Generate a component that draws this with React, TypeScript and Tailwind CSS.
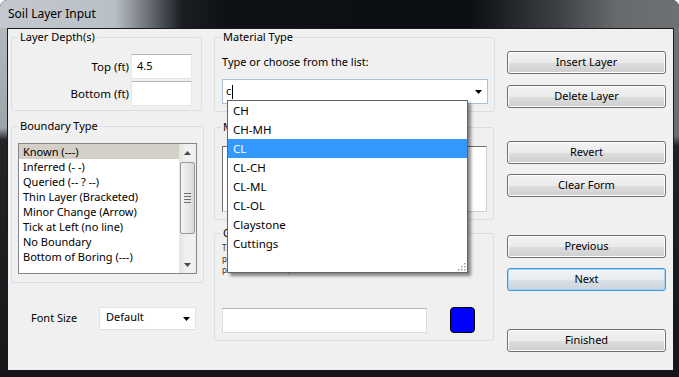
import React from "react";

const boundaryTypes = [
  "Known (---)",
  "Inferred (- -)",
  "Queried (-- ? --)",
  "Thin Layer (Bracketed)",
  "Minor Change (Arrow)",
  "Tick at Left (no line)",
  "No Boundary",
  "Bottom of Boring (---)",
];

const materials = ["CH", "CH-MH", "CL", "CL-CH", "CL-ML", "CL-OL", "Claystone", "Cuttings"];

function Arrow({ up = false, color = "#000" }: { up?: boolean; color?: string }) {
  return (
    <svg width="7" height="4" viewBox="0 0 7 4">
      {up ? <path d="M0 4 L3.5 0 L7 4 Z" fill={color} /> : <path d="M0 0 L7 0 L3.5 4 Z" fill={color} />}
    </svg>
  );
}

function Btn({ label, mt, isDefault = false }: { label: string; mt: string; isDefault?: boolean }) {
  return (
    <button
      className={`${mt} flex h-[23px] w-[159px] items-center justify-center rounded-[3px] border text-[11px] text-black ${
        isDefault
          ? "border-[#3d95dc] bg-[linear-gradient(to_bottom,#f1f5f8_0%,#e7ecf0_50%,#d9e0e6_51%,#cdd5dc_100%)] shadow-[inset_0_0_0_1px_#a8d6f5]"
          : "border-[#707070] bg-[linear-gradient(to_bottom,#f2f2f2_0%,#ebebeb_50%,#dddddd_51%,#cfcfcf_100%)] shadow-[inset_0_0_0_1px_#fcfcfc]"
      }`}
    >
      {label}
    </button>
  );
}

function Group({ title, className, children }: { title: string; className: string; children?: React.ReactNode }) {
  return (
    <fieldset className={`${className} rounded-[3px] border border-[#d5dfe5] px-[6px] pb-0 pt-0`}>
      <legend className="px-[2px] leading-[16px] text-black">{title}</legend>
      {children}
    </fieldset>
  );
}

export default function App() {
  return (
    <div className="h-[377px] w-[679px] bg-white">
      <div className="flex h-full w-full flex-col overflow-hidden rounded-t-[7px] bg-[#131518] font-['Noto_Sans',sans-serif] text-[11px]">
        {/* TITLE BAR */}
        <div className="flex h-[28px] items-center bg-[linear-gradient(90deg,#c4c9cf_0px,#b9bfc6_115px,#5b6066_155px,#1a1e23_182px,#0d1116_230px,#0b0f14_470px,#3e4246_560px,#67696c_615px,#6e7174_679px)] pl-[8px] text-[12px] text-black">
          Soil Layer Input
        </div>

        <div className="flex">
          <div className="w-[7px] bg-[linear-gradient(180deg,#b3b8bd_0px,#9fa4a9_100px,#222528_112px,#15171a_100%)]" />

          {/* CLIENT */}
          <div className="flex h-[343px] w-[667px] border border-[#1b1b1b] bg-[#f0f0f0]">
            {/* LEFT COLUMN */}
            <div className="ml-[3px] flex w-[191px] flex-col">
              <Group title="Layer Depth(s)" className="h-[82px]">
                <div className="mt-[9px] flex flex-col gap-[2px] pr-[3px]">
                  <div className="flex items-center justify-end">
                    <span className="mr-[2px] text-[11.5px] text-black">Top (ft)</span>
                    <div className="flex h-[25px] w-[61px] items-center border border-[#e3e6ea] border-t-[#b5b8bd] bg-white pl-[5px]">
                      4.5
                    </div>
                  </div>
                  <div className="flex items-center justify-end">
                    <span className="mr-[2px] text-[11.5px] text-black">Bottom (ft)</span>
                    <div className="h-[25px] w-[61px] border border-[#e3e6ea] border-t-[#b5b8bd] bg-white" />
                  </div>
                </div>
              </Group>

              <Group title="Boundary Type" className="mt-[7px] h-[165px]">
                <div className="mt-[9px] flex h-[131px] w-[179px] border border-[#828790] bg-white">
                  <div className="flex-1">
                    {boundaryTypes.map((b, i) => (
                      <div
                        key={b}
                        className={`flex h-[15px] items-center pl-[4px] leading-[15px] text-black ${
                          i === 0 ? "bg-[#d4d0c8]" : ""
                        }`}
                      >
                        {b}
                      </div>
                    ))}
                  </div>
                  {/* scrollbar */}
                  <div className="flex w-[17px] flex-col items-center bg-[linear-gradient(90deg,#e3e3e3,#f0f0f0_40%,#f0f0f0)]">
                    <div className="flex h-[17px] items-center">
                      <Arrow up color="#4a4a4a" />
                    </div>
                    <div className="mt-[1px] flex h-[72px] w-[15px] flex-col items-center justify-center gap-[2px] rounded-[2px] border border-[#979797] bg-[linear-gradient(90deg,#f4f4f4,#e8e8e8_50%,#d9d9d9)]">
                      <div className="h-[1px] w-[7px] bg-[#6f6f6f]" />
                      <div className="h-[1px] w-[7px] bg-[#6f6f6f]" />
                      <div className="h-[1px] w-[7px] bg-[#6f6f6f]" />
                      <div className="h-[1px] w-[7px] bg-[#6f6f6f]" />
                    </div>
                    <div className="flex-1" />
                    <div className="flex h-[17px] items-center">
                      <Arrow color="#4a4a4a" />
                    </div>
                  </div>
                </div>
              </Group>

              <div className="mt-[24px] flex h-[23px] items-center">
                <span className="ml-[20px] w-[68px] text-black">Font Size</span>
                <div className="flex h-[23px] w-[97px] items-center justify-between border border-[#e2e2e2] bg-white pl-[6px] pr-[5px]">
                  <span className="-mt-[3px]">Default</span>
                  <Arrow />
                </div>
              </div>
            </div>

            {/* MIDDLE COLUMN */}
            <div className="ml-[12px] flex w-[280px] flex-col">
              <Group title="Material Type" className="h-[83px]">
                <div className="pl-[1px]">
                  <div className="mt-[9px] leading-[16px] text-black">Type or choose from the list:</div>
                  <div className="relative mt-[9px] flex h-[25px] w-[266px] items-center justify-between border border-[#abc1d8] bg-white pl-[3px] pr-[5px]">
                    <span className="flex items-center">
                      c<span className="ml-[1px] h-[14px] w-[1px] bg-black" />
                    </span>
                    <Arrow />

                    {/* DROPDOWN LIST */}
                    <div className="absolute left-[4px] top-[20px] z-10 h-[173px] w-[241px] border border-[#646464] bg-white shadow-[3px_3px_3px_rgba(0,0,0,0.45)]">
                      {materials.map((m) => (
                        <div
                          key={m}
                          className={`flex h-[19px] items-center pl-[5px] text-[11.5px] ${
                            m === "CL" ? "bg-[#3399ff] text-white" : "text-black"
                          }`}
                        >
                          {m}
                        </div>
                      ))}
                      <svg className="absolute bottom-[1px] right-[1px]" width="10" height="10" viewBox="0 0 10 10">
                        {[
                          [8, 2],
                          [8, 5],
                          [5, 5],
                          [8, 8],
                          [5, 8],
                          [2, 8],
                        ].map(([x, y]) => (
                          <rect key={`${x}-${y}`} x={x} y={y} width="1.5" height="1.5" fill="#a0a0a0" />
                        ))}
                      </svg>
                    </div>
                  </div>
                </div>
              </Group>

              <Group title="Modifier" className="mt-[7px] h-[101px]">
                <div className="pl-[1px]">
                  <div className="mt-[11px] h-[66px] w-[265px] border border-[#cfcfcf] border-l-[#6e6e6e] border-t-[#6e6e6e] bg-white" />
                </div>
              </Group>

              <Group title="Color" className="mt-[5px] h-[116px]">
                <div className="pl-[1px]">
                  <div className="mt-[1px] text-[8px] leading-[11px] text-[#3a2a1a]">
                    <div>The line will be drawn in the colour shown in the box below.</div>
                    <div>press the box to choose a new colour from the colour palette</div>
                    <div>picked or entered, the selected colour will be used.</div>
                  </div>
                  <div className="mt-[32px] flex items-center">
                    <div className="h-[25px] w-[205px] border border-[#dcdcdc] border-t-[#b0b0b0] bg-white" />
                    <div className="ml-[23px] h-[26px] w-[25px] rounded-[4px] border border-black bg-[#0000ff]" />
                  </div>
                </div>
              </Group>
            </div>

            {/* RIGHT COLUMN */}
            <div className="ml-[13px] flex w-[159px] flex-col">
              <Btn label="Insert Layer" mt="mt-[22px]" />
              <Btn label="Delete Layer" mt="mt-[11px]" />
              <Btn label="Revert" mt="mt-[33px]" />
              <Btn label="Clear Form" mt="mt-[10px]" />
              <Btn label="Previous" mt="mt-[38px]" />
              <Btn label="Next" mt="mt-[10px]" isDefault />
              <Btn label="Finished" mt="mt-[38px]" />
            </div>
          </div>

          <div className="w-[5px] bg-[linear-gradient(180deg,#707376_0px,#6b6e71_108px,#202326_118px,#15171a_100%)]" />
        </div>

        <div className="h-[6px] bg-[#131518]" />
      </div>
    </div>
  );
}
